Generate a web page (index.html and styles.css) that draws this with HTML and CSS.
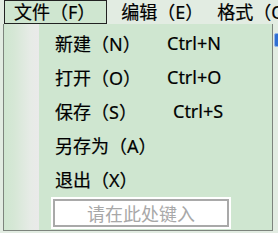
FILE: index.html
```html
<!DOCTYPE html>
<html>
<head>
  <meta charset="utf-8">
  <link rel="stylesheet" href="styles.css">
</head>
<body>
  <div class="menubar">
    <div class="menu-title active">文件（F）</div>
    <div class="menu-title">编辑（E）</div>
    <div class="menu-title">格式（O）</div>
  </div>
  <div class="backdrop">
    <span class="tool-icon"></span>
  </div>

  <div class="dropdown">
    <div class="gutter"></div>
    <div class="items">
      <div class="item"><span class="label">新建（N）</span><span class="key">Ctrl+N</span></div>
      <div class="item"><span class="label">打开（O）</span><span class="key">Ctrl+O</span></div>
      <div class="item"><span class="label">保存（S）</span><span class="key shift">Ctrl+S</span></div>
      <div class="item"><span class="label">另存为（A）</span></div>
      <div class="item"><span class="label">退出（X）</span></div>
      <div class="type-here">
        <div class="type-box">请在此处键入</div>
      </div>
    </div>
  </div>
</body>
</html>
```

FILE: styles.css
```css
body {
  margin: 0;
  width: 278px;
  height: 233px;
  overflow: hidden;
  position: relative;
  background: #e2ece2;
  font-family: "Noto Sans", "Noto Sans CJK SC", sans-serif;
  color: #000;
}

.menubar {
  height: 24px;
  display: flex;
  padding-left: 4px;
  white-space: nowrap;
  overflow: hidden;
}

.menu-title {
  flex: none;
  padding: 0 6px;
  font-size: 18px;
  line-height: 22px;
  border: 1px solid transparent;
  -webkit-text-stroke: 0.2px #000;
}

.menu-title.active {
  background: #cfe6d0;
  border-color: #222;
  padding: 0 11px 0 9px;
  margin-right: 7px;
}

.backdrop {
  height: 209px;
  position: relative;
}

.tool-icon {
  position: absolute;
  left: 274px;
  top: 9px;
  width: 12px;
  height: 12px;
  border-radius: 2px;
  background: #2f6fd1;
  border: 1px solid #8fb4ea;
}

.dropdown {
  position: absolute;
  left: 3px;
  top: 24px;
  width: 268px;
  height: 206px;
  border: 1px solid #7d847d;
  border-top: none;
  background: #cfe6d0;
  display: flex;
}

.gutter {
  width: 35px;
  background: linear-gradient(to right, #cfe6d0 0%, #d6e7d6 30%, #e6ebe6 75%, #eaeaea 100%);
}

.items {
  flex: 1;
  padding: 2px 0 0 16px;
}

.item {
  height: 34px;
  display: flex;
  align-items: center;
  font-size: 18px;
  -webkit-text-stroke: 0.2px #000;
}

.label {
  width: 112px;
}

.key.shift {
  padding-left: 6px;
}

.type-here {
  margin: 1px 0 0 -4px;
  width: 180px;
  height: 32px;
  background: #fff;
  padding: 2px;
  box-sizing: border-box;
}

.type-box {
  height: 100%;
  border: 2px solid #a9a9a9;
  box-sizing: border-box;
  color: #a8a8a8;
  font-size: 18px;
  line-height: 24px;
  text-align: center;
  font-family: "Noto Sans CJK SC", sans-serif;
}
```
